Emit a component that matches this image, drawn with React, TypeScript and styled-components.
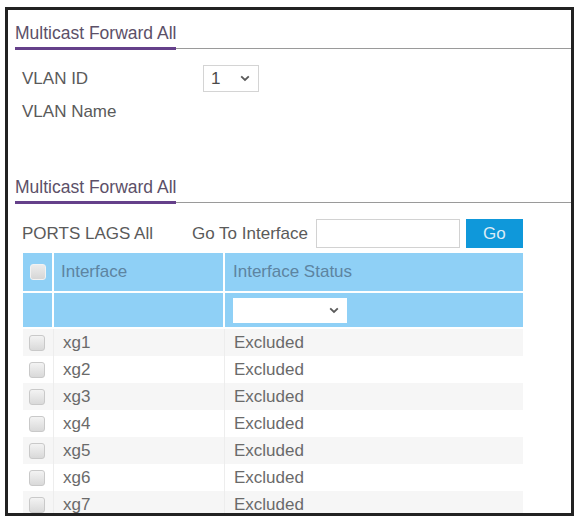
import * as React from "react";
import styled, { createGlobalStyle } from "styled-components";

const GlobalStyle = createGlobalStyle`
  html, body {
    margin: 0;
    padding: 0;
    background: #ffffff;
  }
  body {
    font-family: "Liberation Sans", Arial, sans-serif;
    font-size: 17px;
    color: #5e5e5e;
  }
  * {
    box-sizing: border-box;
  }
`;

const Frame = styled.div`
  margin: 7px 0 0 5px;
  width: 569px;
  height: 509px;
  border: 3px solid #222222;
  overflow: hidden;
  padding-top: 13px;
`;

const SectionHeader = styled.div<{ $top?: number }>`
  display: flex;
  align-items: flex-end;
  margin-left: 7px;
  margin-top: ${(p) => p.$top ?? 0}px;
`;

const Tab = styled.div`
  line-height: 20px;
  padding-bottom: 4px;
  border-bottom: 3px solid #65408a;
  color: #5c5068;
  font-size: 17.5px;
  white-space: nowrap;
`;

const Rule = styled.div`
  flex: 1;
  height: 0;
  border-bottom: 1px solid #9a9a9a;
  margin-bottom: 1px;
`;

const FormRow = styled.div<{ $top: number }>`
  display: flex;
  align-items: center;
  height: 27px;
  margin-top: ${(p) => p.$top}px;
  padding-left: 14px;
`;

const Label = styled.div<{ $width?: number }>`
  width: ${(p) => (p.$width ? `${p.$width}px` : "auto")};
  color: #5a5a5a;
  white-space: nowrap;
`;

const SelectBox = styled.div<{ $width: number; $height: number; $border?: boolean }>`
  display: flex;
  align-items: center;
  justify-content: space-between;
  width: ${(p) => p.$width}px;
  height: ${(p) => p.$height}px;
  background: #ffffff;
  border: ${(p) => (p.$border ? "1px solid #d4d4d4" : "none")};
  padding: 0 8px 0 7px;
  color: #4a4a4a;
`;

const Toolbar = styled.div`
  display: flex;
  align-items: center;
  height: 29px;
  margin-top: 15px;
  padding-left: 14px;
`;

const Gap = styled.div<{ $w: number }>`
  width: ${(p) => p.$w}px;
  flex: none;
`;

const TextInput = styled.div`
  width: 144px;
  height: 29px;
  border: 1px solid #d2d2d2;
  background: #ffffff;
`;

const GoButton = styled.div`
  display: flex;
  align-items: center;
  justify-content: center;
  width: 57px;
  height: 29px;
  background: #0f98da;
  color: #dcecf6;
`;

const Table = styled.table`
  margin: 5px 0 0 15px;
  width: 500px;
  border-collapse: separate;
  border-spacing: 0;
  table-layout: fixed;
`;

const HeadCell = styled.td<{ $w?: number; $pad?: number; $h: number }>`
  width: ${(p) => (p.$w ? `${p.$w}px` : "auto")};
  height: ${(p) => p.$h}px;
  background: #8fd0f6;
  color: #5d84a1;
  padding: 0 0 0 ${(p) => p.$pad ?? 0}px;
  border-right: 2px solid #ffffff;
  border-bottom: 2px solid #ffffff;
  vertical-align: middle;
  &:last-child {
    border-right: none;
  }
`;

const Row = styled.tr<{ $shade: boolean }>`
  background: ${(p) => (p.$shade ? "#f6f6f6" : "#ffffff")};
`;

const Cell = styled.td<{ $pad?: number }>`
  height: 27px;
  padding: 0 0 0 ${(p) => p.$pad ?? 0}px;
  border-right: 1px solid #ededed;
  color: #6a6a6a;
  vertical-align: middle;
  &:last-child {
    border-right: none;
  }
`;

const Check = styled.span<{ $head?: boolean }>`
  display: block;
  width: 16px;
  height: 16px;
  margin-left: ${(p) => (p.$head ? 7 : 6)}px;
  border-radius: 3px;
  border: 1px solid ${(p) => (p.$head ? "#f2f2f2" : "#c9c9c9")};
  background: ${(p) =>
    p.$head
      ? "linear-gradient(#ececec, #d6d6d6)"
      : "linear-gradient(#f3f3f3, #d9d9d9)"};
`;

const Chevron: React.FC = () => (
  <svg width="10" height="7" viewBox="0 0 10 7">
    <path d="M1.2 1.3 L5 5 L8.8 1.3" fill="none" stroke="#5a5a5a" strokeWidth="1.8" />
  </svg>
);

const ports = ["xg1", "xg2", "xg3", "xg4", "xg5", "xg6", "xg7"];

const App: React.FC = () => {
  return (
    <>
      <GlobalStyle />
      <Frame>
        <SectionHeader>
          <Tab>Multicast Forward All</Tab>
          <Rule />
        </SectionHeader>

        <FormRow $top={15}>
          <Label $width={181}>VLAN ID</Label>
          <SelectBox $width={56} $height={27} $border>
            <span>1</span>
            <Chevron />
          </SelectBox>
        </FormRow>
        <FormRow $top={6}>
          <Label>VLAN Name</Label>
        </FormRow>

        <SectionHeader $top={52}>
          <Tab>Multicast Forward All</Tab>
          <Rule />
        </SectionHeader>

        <Toolbar>
          <Label $width={170}>PORTS LAGS All</Label>
          <Label>Go To Interface</Label>
          <Gap $w={8} />
          <TextInput />
          <Gap $w={6} />
          <GoButton>Go</GoButton>
        </Toolbar>

        <Table>
          <tbody>
            <tr>
              <HeadCell $w={31} $h={40}>
                <Check $head />
              </HeadCell>
              <HeadCell $w={171} $h={40} $pad={7}>
                Interface
              </HeadCell>
              <HeadCell $h={40} $pad={8}>
                Interface Status
              </HeadCell>
            </tr>
            <tr>
              <HeadCell $h={36} />
              <HeadCell $h={36} />
              <HeadCell $h={36} $pad={8}>
                <SelectBox $width={114} $height={25}>
                  <span />
                  <Chevron />
                </SelectBox>
              </HeadCell>
            </tr>
            {ports.map((p, i) => (
              <Row key={p} $shade={i % 2 === 0}>
                <Cell>
                  <Check />
                </Cell>
                <Cell $pad={9}>{p}</Cell>
                <Cell $pad={9}>Excluded</Cell>
              </Row>
            ))}
          </tbody>
        </Table>
      </Frame>
    </>
  );
};

export default App;
